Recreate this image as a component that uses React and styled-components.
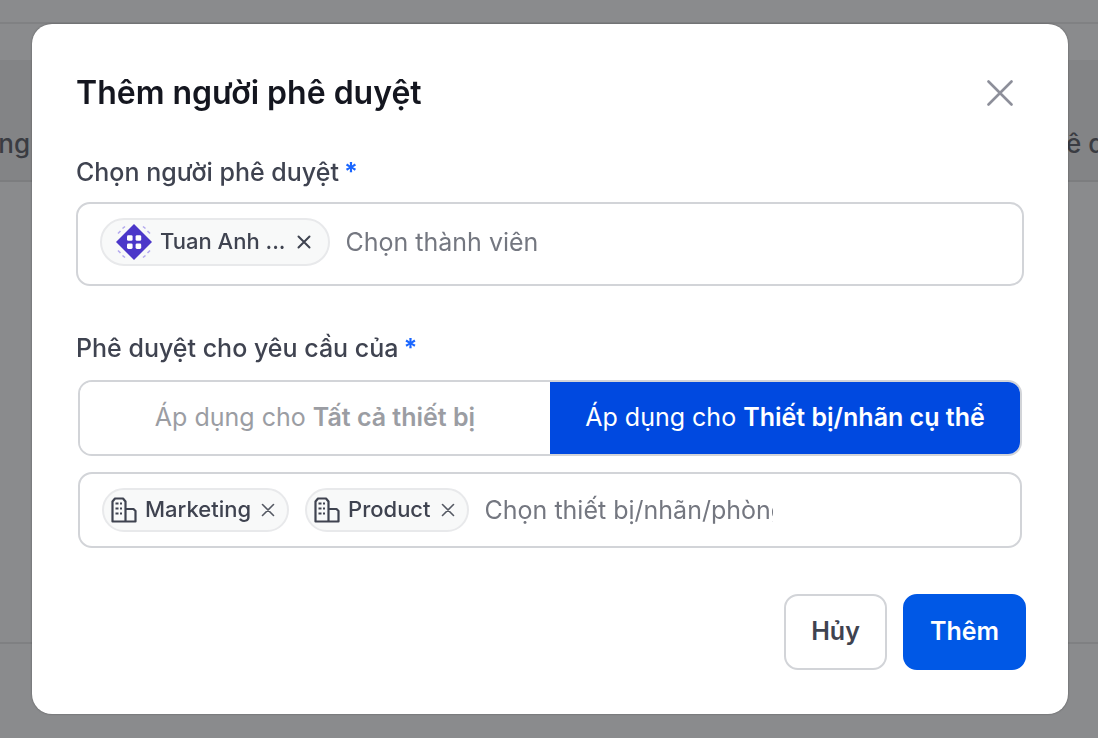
import React, { useState } from "react";
import styled, { createGlobalStyle, css } from "styled-components";

const GlobalStyle = createGlobalStyle`
  *, *::before, *::after { box-sizing: border-box; }
  body {
    margin: 0;
    background: #8a8b8d;
    color: #3f4350;
    font-family: Inter, "Liberation Sans", sans-serif;
    font-size: 25px;
    line-height: 32px;
  }
  button, input { font: inherit; color: inherit; }
`;

const Page = styled.div`
  display: flex;
  flex-direction: column;
  min-height: 100vh;
  overflow: hidden;
`;

const TopBar = styled.div`
  height: 24px;
  border-bottom: 2px solid #808183;
`;

const Spacer = styled.div`
  height: 36px;
`;

const TableHead = styled.div`
  display: flex;
  justify-content: space-between;
  height: 122px;
  padding-top: 48px;
  border-bottom: 2px solid #7c7d7f;
  background: #838486;
  font-size: 26px;
  font-weight: 500;
  line-height: 72px;
  color: #3a3c42;
`;

const HeadCell = styled.span`
  display: flex;
  justify-content: ${(p) => (p.$end ? "flex-end" : "flex-start")};
  width: 32px;
  padding-right: ${(p) => (p.$end ? "2px" : "0")};
  overflow: hidden;
  white-space: nowrap;
`;

const TableBody = styled.div`
  height: 462px;
  border-bottom: 2px solid #7f8082;
`;

const Overlay = styled.div`
  position: fixed;
  inset: 0;
  display: flex;
  align-items: center;
  padding: 24px 30px 24px 32px;
`;

const Dialog = styled.section`
  width: 100%;
  padding: 44px;
  border-radius: 20px;
  background: #fff;
  box-shadow: 0 0 2px rgba(0, 0, 0, 0.4);
`;

const Header = styled.header`
  display: flex;
  align-items: center;
  justify-content: space-between;
  height: 50px;
  margin-bottom: 38px;
`;

const Title = styled.h2`
  margin: 0;
  font-size: 32px;
  font-weight: 600;
  line-height: 40px;
  color: #14161f;
`;

const IconButton = styled.button`
  display: flex;
  align-items: center;
  justify-content: center;
  width: ${(p) => p.$size}px;
  height: ${(p) => p.$size}px;
  padding: 0;
  border: 0;
  background: none;
  color: ${(p) => p.$color};
  cursor: pointer;
`;

const Label = styled.label`
  display: block;
  margin-bottom: 14px;
  font-weight: 500;
`;

const Required = styled.span`
  margin-left: 5px;
  font-weight: 700;
  color: #1a66ff;
`;

const Field = styled.div`
  display: flex;
  align-items: center;
  gap: 16px;
  height: ${(p) => (p.$large ? 84 : 76)}px;
  padding: ${(p) => (p.$large ? "0 22px 4px" : "0 22px")};
  border: 2px solid #d2d4d8;
  border-radius: 14px;
`;

const Group = styled.div`
  display: flex;
  flex-direction: column;
  gap: 16px;
  padding: 2px;
`;

const MemberBlock = styled.div`
  margin-bottom: 46px;
`;

const Chip = styled.span`
  display: flex;
  flex: none;
  align-items: center;
  height: ${(p) => (p.$large ? 48 : 44)}px;
  padding: ${(p) => (p.$large ? "0 14px" : "0 10px 0 7px")};
  border: 2px solid #e8e9eb;
  border-radius: 24px;
  background: #f8f9f9;
  font-size: 22px;
  font-weight: 500;
  line-height: 28px;
  gap: 8px;
`;

const ChipText = styled.span`
  padding-bottom: 2px;
`;

const ChipIcon = styled.svg`
  display: block;
  flex: none;
`;

const TextInput = styled.input`
  flex: 0 1 288px;
  min-width: 0;
  width: 288px;
  height: 40px;
  padding: 0;
  border: 0;
  outline: 0;
  background: none;
  &::placeholder { color: #747780; opacity: 1; }
`;

const Segments = styled.div`
  display: flex;
  height: 76px;
  border: 2px solid #d2d4d8;
  border-radius: 14px;
  overflow: hidden;
`;

const Segment = styled.button`
  flex: 1 1 0;
  padding: 0 0 2px;
  border: 0;
  background: #fff;
  color: #9b9da3;
  white-space: nowrap;
  cursor: pointer;
  ${(p) => p.$active && css`
    background: #0049e0;
    color: #fff;
  `}
  strong { font-weight: 600; }
`;

const Footer = styled.footer`
  display: flex;
  justify-content: flex-end;
  gap: 16px;
  margin: 44px -2px 0 0;
`;

const Action = styled.button`
  height: 76px;
  padding: 0 25px 2px;
  border: 2px solid #d2d4d8;
  border-radius: 14px;
  background: #fff;
  font-weight: 600;
  cursor: pointer;
  ${(p) => p.$primary && css`
    border-color: #0058e6;
    background: #0058e6;
    color: #fff;
  `}
`;

const Cross = ({ size, stroke }) => (
  <svg width={size} height={size} viewBox={`0 0 ${size} ${size}`} fill="none" stroke="currentColor" strokeWidth={stroke} strokeLinecap="round" aria-hidden="true">
    <path d={`M1.5 1.5L${size - 1.5} ${size - 1.5}M${size - 1.5} 1.5L1.5 ${size - 1.5}`} />
  </svg>
);

const Avatar = () => (
  <ChipIcon width="36" height="36" viewBox="0 0 36 36" aria-hidden="true">
    <path d="M18 0L36 18L18 36L0 18Z" fill="#4b37c9" />
    <g fill="#fff">
      <rect x="11" y="11.2" width="5.6" height="5.6" rx="1.4" />
      <rect x="19.6" y="11.2" width="5.6" height="5.6" rx="1.4" />
      <rect x="11" y="19.4" width="5.6" height="5.6" rx="1.4" />
      <rect x="19.6" y="19.4" width="5.6" height="5.6" rx="1.4" />
    </g>
    <path d="M2 9.5L4.5 7M6.500 4.500L9 2.500M27 2.500L29.500 4.500M31.500 7L34 9.500M2 26.500L4.500 29M6.500 31.500L9 33.500M27 33.500L29.500 31.500M31.500 29L34 26.500" stroke="#b3a9ee" strokeWidth="1.6" fill="none" />
  </ChipIcon>
);

const Building = () => (
  <ChipIcon width="26" height="26" viewBox="0 0 26 26" fill="none" stroke="#3f4350" strokeWidth="2.2" strokeLinejoin="round" aria-hidden="true">
    <path d="M1.500 24.500V4.500L4 1.500H12L14.500 4.500V24.500ZM14.500 12H22.500L24.500 14V24.500H14.500" />
    <path d="M4.500 6.500H7.500M9 6.500H11M4.500 11.500H7.500M9 11.500H11M4.500 16.500H7.500M9 16.500H11" strokeWidth="1.800" />
  </ChipIcon>
);

function DepartmentChip({ name, onRemove }) {
  return (
    <Chip>
      <Building />
      <ChipText>{name}</ChipText>
      <IconButton type="button" $size={18} $color="#555963" aria-label={`Xóa ${name}`} onClick={onRemove}>
        <Cross size={14} stroke={1.6} />
      </IconButton>
    </Chip>
  );
}

export default function App() {
  const [scope, setScope] = useState("specific");
  const [departments, setDepartments] = useState(["Marketing", "Product"]);

  return (
    <>
      <GlobalStyle />
      <Page aria-hidden="true">
        <TopBar />
        <Spacer />
        <TableHead>
          <HeadCell $end>ng</HeadCell>
          <HeadCell>ê d</HeadCell>
        </TableHead>
        <TableBody />
      </Page>
      <Overlay>
        <Dialog role="dialog" aria-modal="true" aria-labelledby="dialog-title">
          <Header>
            <Title id="dialog-title">Thêm người phê duyệt</Title>
            <IconButton type="button" $size={48} $color="#8d8f9a" aria-label="Đóng">
              <Cross size={26} stroke={2.6} />
            </IconButton>
          </Header>
          <MemberBlock>
            <Label htmlFor="member">Chọn người phê duyệt<Required>*</Required></Label>
            <Field $large>
              <Chip $large>
                <Avatar />
                <ChipText>Tuan Anh ...</ChipText>
                <IconButton type="button" $size={20} $color="#3f4350" aria-label="Xóa Tuan Anh">
                  <Cross size={14} stroke={2} />
                </IconButton>
              </Chip>
              <TextInput id="member" placeholder="Chọn thành viên" />
            </Field>
          </MemberBlock>
          <Label htmlFor="department">Phê duyệt cho yêu cầu của<Required>*</Required></Label>
          <Group>
            <Segments>
              <Segment type="button" $active={scope === "all"} aria-pressed={scope === "all"} onClick={() => setScope("all")}>
                Áp dụng cho <strong>Tất cả thiết bị</strong>
              </Segment>
              <Segment type="button" $active={scope === "specific"} aria-pressed={scope === "specific"} onClick={() => setScope("specific")}>
                Áp dụng cho <strong>Thiết bị/nhãn cụ thể</strong>
              </Segment>
            </Segments>
            <Field>
              {departments.map((name) => (
                <DepartmentChip key={name} name={name} onRemove={() => setDepartments(departments.filter((d) => d !== name))} />
              ))}
              <TextInput id="department" placeholder="Chọn thiết bị/nhãn/phòng ban" />
            </Field>
          </Group>
          <Footer>
            <Action type="button">Hủy</Action>
            <Action type="button" $primary>Thêm</Action>
          </Footer>
        </Dialog>
      </Overlay>
    </>
  );
}
